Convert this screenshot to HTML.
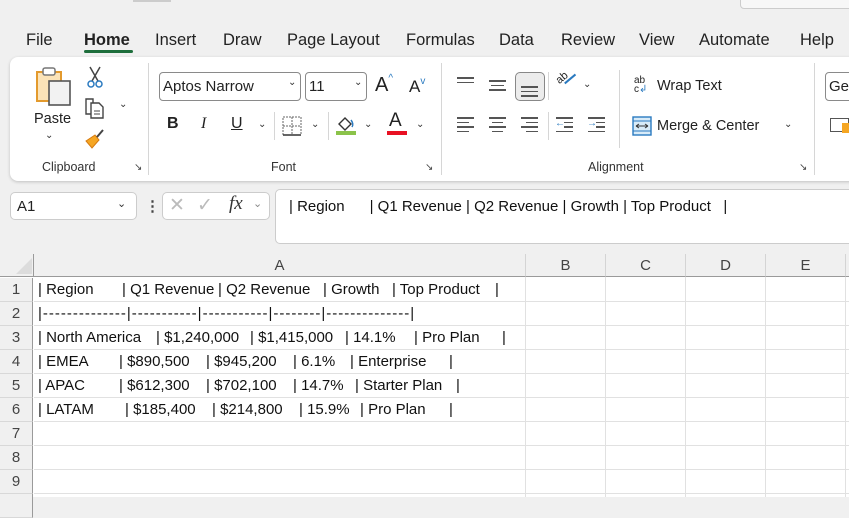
<!DOCTYPE html>
<html><head><meta charset="utf-8"><style>
*{margin:0;padding:0;box-sizing:border-box}
body{width:849px;height:497px;overflow:hidden;background:#f0f0f0;font-family:"Liberation Sans",sans-serif;color:#222;position:relative}
.a{position:absolute;white-space:pre}
.tab{position:absolute;top:31px;font-size:16.5px;color:#222}
.rib{position:absolute;left:10px;top:57px;width:860px;height:124px;background:#fff;border-radius:8px;box-shadow:0 1px 3px rgba(0,0,0,.2)}
.sep{position:absolute;width:1px;background:#d6d6d6}
.grp{position:absolute;top:160px;font-size:12.5px;color:#333}
.box{position:absolute;border:1px solid #8a8a8a;border-radius:4px;background:#fff;font-size:15px;padding-left:3px;line-height:27px}
.chev{position:absolute;font-size:10px;color:#333}
.al{position:absolute;width:17px}
.al i{display:block;height:1.6px;background:#555;margin-bottom:3px}
.grid{position:absolute;left:0;top:254px;width:849px;height:243px;background:#fff}
.ch{position:absolute;top:254px;height:23px;background:#f0f0f0;border-right:1px solid #d4d4d4;border-bottom:1px solid #9a9a9a;font-size:15px;color:#444;text-align:center;line-height:23px}
.rh{position:absolute;left:0;width:33px;height:24px;background:#f0f0f0;border-bottom:1px solid #d8d8d8;border-right:1px solid #9a9a9a;font-size:15px;color:#444;text-align:center;line-height:23px}
.hl{position:absolute;left:34px;width:815px;height:1px;background:#e1e1e1}
.vl{position:absolute;top:277px;height:220px;width:1px;background:#e1e1e1}
.c{position:absolute;font-size:15px;color:#111;white-space:pre;line-height:23px}
</style></head><body>
<div class="a" style="left:740px;top:-4px;width:120px;height:13px;border:1px solid #ccc;border-radius:4px;background:#f7f7f7"></div>
<div class="a" style="left:133px;top:0;width:38px;height:2px;background:#ccc"></div>

<div class="tab" style="left:26px">File</div>
<div class="tab" style="left:84px;font-weight:bold">Home</div>
<div class="a" style="left:84px;top:50px;width:49px;height:3px;background:#1e6e3c;border-radius:2px"></div>
<div class="tab" style="left:155px">Insert</div>
<div class="tab" style="left:223px">Draw</div>
<div class="tab" style="left:287px">Page Layout</div>
<div class="tab" style="left:406px">Formulas</div>
<div class="tab" style="left:499px">Data</div>
<div class="tab" style="left:561px">Review</div>
<div class="tab" style="left:639px">View</div>
<div class="tab" style="left:699px">Automate</div>
<div class="tab" style="left:800px">Help</div>

<div class="rib"></div>
<svg class="a" style="left:34px;top:66px" width="40" height="42" viewBox="0 0 40 42">
<rect x="3" y="6" width="24" height="29" fill="#fbe3b8" stroke="#e39a2d" stroke-width="2"/>
<rect x="9" y="2" width="12" height="7" rx="2" fill="#fff" stroke="#777" stroke-width="1.5"/>
<rect x="15" y="15" width="21" height="24" fill="#f2f2f2" stroke="#555" stroke-width="1.6"/>
</svg>
<div class="a" style="left:34px;top:111px;font-size:14.5px">Paste</div>
<div class="chev" style="left:45px;top:130px">&#8964;</div>
<svg class="a" style="left:86px;top:66px" width="18" height="22" viewBox="0 0 18 22"><path d="M4 1 L12 15 M14 1 L6 15" stroke="#444" stroke-width="1.5"/><circle cx="5" cy="18" r="3" fill="none" stroke="#2a7ac0" stroke-width="1.5"/><circle cx="13" cy="18" r="3" fill="none" stroke="#2a7ac0" stroke-width="1.5"/></svg>
<svg class="a" style="left:84px;top:97px" width="22" height="22" viewBox="0 0 22 22"><path d="M2 2h7v15h-7z" fill="#fff" stroke="#444" stroke-width="1.4"/><path d="M7 6h8l4 4v11h-12z" fill="#fff" stroke="#444" stroke-width="1.4"/><path d="M10 14h6M10 17h6" stroke="#444"/></svg>
<div class="chev" style="left:119px;top:99px">&#8964;</div>
<svg class="a" style="left:84px;top:128px" width="22" height="22" viewBox="0 0 22 22"><path d="M2 13 L11 7 L15 12 L8 20 Z" fill="#f5a623" stroke="#d67a10"/><path d="M13 9 L19 2" stroke="#444" stroke-width="2"/></svg>
<div class="grp" style="left:42px">Clipboard</div>
<div class="a" style="left:134px;top:162px;font-size:10px;color:#444">&#8600;</div>
<div class="sep" style="left:148px;top:63px;height:112px"></div>

<div class="box" style="left:159px;top:72px;width:142px;height:29px">Aptos Narrow</div>
<div class="chev" style="left:288px;top:77px">&#8964;</div>
<div class="box" style="left:305px;top:72px;width:62px;height:29px">11</div>
<div class="chev" style="left:354px;top:77px">&#8964;</div>
<div class="a" style="left:375px;top:73px;font-size:20px">A<span style="font-size:10px;color:#2a7ac0;vertical-align:10px">^</span></div>
<div class="a" style="left:409px;top:76px;font-size:17px">A<span style="font-size:10px;color:#2a7ac0;vertical-align:8px">v</span></div>
<div class="a" style="left:167px;top:115px;font-size:16px;font-weight:bold">B</div>
<div class="a" style="left:201px;top:115px;font-size:16px;font-style:italic;font-family:'Liberation Serif',serif">I</div>
<div class="a" style="left:231px;top:115px;font-size:16px;text-decoration:underline">U</div>
<div class="chev" style="left:258px;top:119px">&#8964;</div>
<div class="sep" style="left:274px;top:112px;height:28px"></div>
<svg class="a" style="left:282px;top:116px" width="20" height="20"><rect x="1" y="1" width="18" height="18" fill="none" stroke="#666" stroke-dasharray="2 1"/><path d="M10 1v18M1 10h18" stroke="#666" stroke-dasharray="2 1"/><path d="M1 19h18" stroke="#333" stroke-width="1.5"/></svg>
<div class="chev" style="left:311px;top:119px">&#8964;</div>
<div class="sep" style="left:328px;top:112px;height:28px"></div>
<svg class="a" style="left:335px;top:114px" width="22" height="22"><path d="M4 10 L10 4 L16 10 L10 16Z" fill="#fff" stroke="#333" stroke-width="1.4"/><path d="M16 6 q3 4 1 7" stroke="#2a7ac0" fill="none" stroke-width="1.5"/><rect x="1" y="17" width="20" height="4" fill="#8bc34a"/></svg>
<div class="chev" style="left:364px;top:119px">&#8964;</div>
<div class="a" style="left:389px;top:110px;font-size:19px">A</div>
<div class="a" style="left:387px;top:131px;width:20px;height:4px;background:#e81123"></div>
<div class="chev" style="left:416px;top:119px">&#8964;</div>
<div class="grp" style="left:271px">Font</div>
<div class="a" style="left:425px;top:162px;font-size:10px;color:#444">&#8600;</div>
<div class="sep" style="left:441px;top:63px;height:112px"></div>

<div class="al" style="left:457px;top:77px"><i></i><i></i><i style="background:#fff"></i></div>
<div class="al" style="left:489px;top:80px"><i></i><i style="width:13px;margin-left:2px"></i><i></i></div>
<div class="a" style="left:515px;top:72px;width:30px;height:29px;border:1px solid #888;border-radius:5px;background:#ececec"></div>
<div class="al" style="left:521px;top:86px"><i></i><i></i><i></i></div>
<div class="sep" style="left:548px;top:72px;height:28px"></div>
<div class="a" style="left:556px;top:72px;font-size:11px;transform:rotate(-40deg)">ab</div>
<div class="a" style="left:563px;top:78px;width:14px;height:1.6px;background:#2a7ac0;transform:rotate(-40deg)"></div>
<div class="chev" style="left:583px;top:79px">&#8964;</div>
<div class="al" style="left:457px;top:117px"><i></i><i style="width:12px"></i><i></i><i style="width:12px"></i></div>
<div class="al" style="left:489px;top:117px"><i></i><i style="width:11px;margin-left:3px"></i><i></i><i style="width:11px;margin-left:3px"></i></div>
<div class="al" style="left:521px;top:117px"><i></i><i style="width:12px;margin-left:5px"></i><i></i><i style="width:12px;margin-left:5px"></i></div>
<div class="sep" style="left:548px;top:112px;height:28px"></div>
<div class="al" style="left:556px;top:117px"><i></i><i style="width:9px;margin-left:8px"></i><i style="width:9px;margin-left:8px"></i><i></i></div>
<div class="a" style="left:555px;top:118px;font-size:10px;color:#2a7ac0">&#8592;</div>
<div class="al" style="left:588px;top:117px"><i></i><i style="width:9px;margin-left:8px"></i><i style="width:9px;margin-left:8px"></i><i></i></div>
<div class="a" style="left:587px;top:118px;font-size:10px;color:#2a7ac0">&#8594;</div>
<div class="sep" style="left:619px;top:70px;height:78px"></div>
<div class="a" style="left:634px;top:76px;font-size:10px;line-height:9px">ab<br>c<span style="color:#2a7ac0">&#8626;</span></div>
<div class="a" style="left:657px;top:78px;font-size:14.5px">Wrap Text</div>
<svg class="a" style="left:632px;top:116px" width="20" height="20"><rect x="1" y="1" width="18" height="18" fill="#d8ebf8" stroke="#2a7ac0" stroke-width="1.4"/><path d="M1 5h18M1 15h18" stroke="#2a7ac0"/><path d="M4 10h12M4 10l3-2M4 10l3 2M16 10l-3-2M16 10l-3 2" stroke="#333" fill="none"/></svg>
<div class="a" style="left:657px;top:118px;font-size:14.5px">Merge &amp; Center</div>
<div class="chev" style="left:784px;top:119px">&#8964;</div>
<div class="grp" style="left:588px">Alignment</div>
<div class="a" style="left:799px;top:162px;font-size:10px;color:#444">&#8600;</div>
<div class="sep" style="left:814px;top:63px;height:112px"></div>
<div class="box" style="left:825px;top:72px;width:40px;height:29px">Ger</div>
<div class="a" style="left:830px;top:118px;width:19px;height:14px;border:1px solid #555;background:#fff"></div>
<div class="a" style="left:842px;top:123px;width:8px;height:10px;background:#f5a623"></div>

<div class="box" style="left:10px;top:192px;width:127px;height:28px;border-color:#ccc;border-radius:5px;font-size:15px;padding-left:6px">A1</div>
<div class="chev" style="left:117px;top:197px;font-size:11px">&#8964;</div>
<div class="a" style="left:145px;top:197px;font-size:15px;color:#444;font-weight:bold">&#8942;</div>
<div class="a" style="left:162px;top:192px;width:108px;height:28px;border:1px solid #ccc;border-radius:5px;background:#fff"></div>
<div class="a" style="left:169px;top:194px;font-size:19px;color:#bbb">&#10005;</div>
<div class="a" style="left:197px;top:194px;font-size:19px;color:#bbb">&#10003;</div>
<div class="a" style="left:229px;top:193px;font-size:19px;font-style:italic;font-family:'Liberation Serif',serif;color:#333">fx</div>
<div class="chev" style="left:253px;top:197px;color:#888;font-size:11px">&#8964;</div>
<div class="a" style="left:275px;top:189px;width:580px;height:55px;border:1px solid #ccc;border-radius:5px;background:#fff"></div>
<div class="c" style="left:289px;top:195px">| Region      | Q1 Revenue | Q2 Revenue | Growth | Top Product   |</div>

<div class="grid"></div>
<div class="a" style="left:0;top:254px;width:34px;height:23px;background:#f0f0f0;border-right:1px solid #9a9a9a;border-bottom:1px solid #9a9a9a"></div>
<div class="a" style="left:16px;top:258px;width:0;height:0;border-left:16px solid transparent;border-bottom:16px solid #dcdcdc"></div>
<div class="ch" style="left:34px;width:492px">A</div>
<div class="ch" style="left:526px;width:80px">B</div>
<div class="ch" style="left:606px;width:80px">C</div>
<div class="ch" style="left:686px;width:80px">D</div>
<div class="ch" style="left:766px;width:80px">E</div>
<div class="ch" style="left:846px;width:10px"></div>

<div class="vl" style="left:525px"></div><div class="vl" style="left:605px"></div><div class="vl" style="left:685px"></div><div class="vl" style="left:765px"></div><div class="vl" style="left:845px"></div>
<div class="hl" style="top:301px"></div><div class="hl" style="top:325px"></div><div class="hl" style="top:349px"></div><div class="hl" style="top:373px"></div><div class="hl" style="top:397px"></div><div class="hl" style="top:421px"></div><div class="hl" style="top:445px"></div><div class="hl" style="top:469px"></div><div class="hl" style="top:493px"></div>

<div class="rh" style="top:278px">1</div><div class="rh" style="top:302px">2</div><div class="rh" style="top:326px">3</div><div class="rh" style="top:350px">4</div><div class="rh" style="top:374px">5</div><div class="rh" style="top:398px">6</div><div class="rh" style="top:422px">7</div><div class="rh" style="top:446px">8</div><div class="rh" style="top:470px">9</div><div class="rh" style="top:494px"></div>

<div class="c" style="top:278px;left:38px">| Region</div><div class="c" style="top:278px;left:122px">| Q1 Revenue</div><div class="c" style="top:278px;left:218px">| Q2 Revenue</div><div class="c" style="top:278px;left:323px">| Growth</div><div class="c" style="top:278px;left:392px">| Top Product</div><div class="c" style="top:278px;left:495px">|</div>
<div class="c" style="top:302px;left:38px;letter-spacing:1px">|--------------|-----------|-----------|--------|--------------|</div>
<div class="c" style="top:326px;left:38px">| North America</div><div class="c" style="top:326px;left:156px">| $1,240,000</div><div class="c" style="top:326px;left:250px">| $1,415,000</div><div class="c" style="top:326px;left:345px">| 14.1%</div><div class="c" style="top:326px;left:414px">| Pro Plan</div><div class="c" style="top:326px;left:502px">|</div>
<div class="c" style="top:350px;left:38px">| EMEA</div><div class="c" style="top:350px;left:119px">| $890,500</div><div class="c" style="top:350px;left:206px">| $945,200</div><div class="c" style="top:350px;left:293px">| 6.1%</div><div class="c" style="top:350px;left:350px">| Enterprise</div><div class="c" style="top:350px;left:449px">|</div>
<div class="c" style="top:374px;left:38px">| APAC</div><div class="c" style="top:374px;left:119px">| $612,300</div><div class="c" style="top:374px;left:206px">| $702,100</div><div class="c" style="top:374px;left:293px">| 14.7%</div><div class="c" style="top:374px;left:355px">| Starter Plan</div><div class="c" style="top:374px;left:456px">|</div>
<div class="c" style="top:398px;left:38px">| LATAM</div><div class="c" style="top:398px;left:125px">| $185,400</div><div class="c" style="top:398px;left:212px">| $214,800</div><div class="c" style="top:398px;left:299px">| 15.9%</div><div class="c" style="top:398px;left:360px">| Pro Plan</div><div class="c" style="top:398px;left:449px">|</div>
</body></html>
